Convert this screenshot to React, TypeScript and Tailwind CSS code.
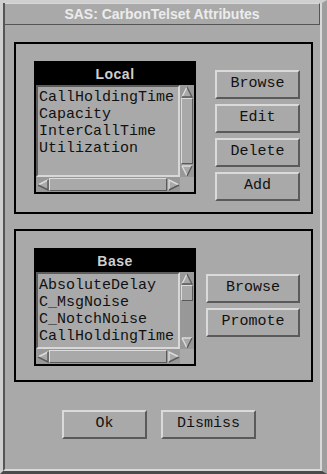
import React from "react";

const MONO = { fontFamily: '"Liberation Mono", "DejaVu Sans Mono", monospace' };
const SANS = { fontFamily: '"Liberation Sans", Arial, sans-serif' };

function Arrow({ dir }: { dir: "up" | "down" | "left" | "right" }) {
  let pts = "";
  let light = "";
  let dark = "";
  if (dir === "up") {
    pts = "6,1 11,11 1,11";
    light = "M6,1 L1,11";
    dark = "M6,1 L11,11 L1,11";
  } else if (dir === "down") {
    pts = "1,1 11,1 6,11";
    light = "M1,1 L11,1 M1,1 L6,11";
    dark = "M11,1 L6,11";
  } else if (dir === "left") {
    pts = "1,6 11,1 11,11";
    light = "M1,6 L11,1";
    dark = "M11,1 L11,11 L1,6";
  } else {
    pts = "1,1 11,6 1,11";
    light = "M1,11 L1,1 L11,6";
    dark = "M11,6 L1,11";
  }
  return (
    <svg width="12" height="12" viewBox="0 0 12 12">
      <polygon points={pts} fill="#a9a9a9" />
      <path d={light} stroke="#dcdcdc" strokeWidth="1.4" fill="none" />
      <path d={dark} stroke="#5a5a5a" strokeWidth="1.4" fill="none" />
    </svg>
  );
}

function VScroll({ h, thumb }: { h: number; thumb: number }) {
  return (
    <div className="w-[14px] flex flex-col bg-[#989898]" style={{ height: h }}>
      <div className="h-[13px] flex items-center justify-center shrink-0">
        <Arrow dir="up" />
      </div>
      <div className="flex-1 flex flex-col">
        <div
          className="mx-[1px] bg-[#a9a9a9] border-t border-l border-t-[#dcdcdc] border-l-[#dcdcdc] border-b border-r border-b-[#5a5a5a] border-r-[#5a5a5a]"
          style={{ height: thumb }}
        />
      </div>
      <div className="h-[13px] flex items-center justify-center shrink-0">
        <Arrow dir="down" />
      </div>
    </div>
  );
}

function HScroll() {
  return (
    <div className="flex h-[15px]">
      <div className="w-[144px] h-[15px] flex bg-[#989898] items-center">
        <div className="w-[13px] flex items-center justify-center">
          <Arrow dir="left" />
        </div>
        <div className="flex-1 h-[13px] bg-[#a9a9a9] border-t border-l border-t-[#dcdcdc] border-l-[#dcdcdc] border-b border-r border-b-[#5a5a5a] border-r-[#5a5a5a]" />
        <div className="w-[13px] flex items-center justify-center">
          <Arrow dir="right" />
        </div>
      </div>
      <div className="w-[14px] h-[15px] bg-[#a9a9a9]" />
    </div>
  );
}

function ListBox({
  title,
  items,
  h,
  thumb,
  pt,
}: {
  title: string;
  items: string[];
  h: number;
  thumb: number;
  pt: number;
}) {
  return (
    <div className="w-[162px] border-2 border-black flex flex-col shrink-0 bg-[#a9a9a9]">
      <div
        className="h-[22px] bg-black text-[#cfcfcf] text-[14px] font-bold flex items-center justify-center tracking-[0.5px]"
        style={SANS}
      >
        {title}
      </div>
      <div className="flex">
        <div
          className="w-[144px] border-t-2 border-l-2 border-t-[#5c5c5c] border-l-[#5c5c5c] border-b-2 border-r-2 border-b-[#d8d8d8] border-r-[#d8d8d8] overflow-hidden pl-[1px]"
          style={{ height: h, paddingTop: pt }}
        >
          {items.map((it) => (
            <div
              key={it}
              className="text-[15px] leading-[17px] text-[#111111] whitespace-nowrap"
              style={MONO}
            >
              {it}
            </div>
          ))}
        </div>
        <VScroll h={h} thumb={thumb} />
      </div>
      <HScroll />
    </div>
  );
}

function Btn({ label, w }: { label: string; w: number }) {
  return (
    <div
      className="h-[29px] flex items-center justify-center bg-[#a9a9a9] border-2 border-t-[#dadada] border-l-[#dadada] border-b-[#5a5a5a] border-r-[#5a5a5a] text-[15px] text-[#111111] shrink-0"
      style={{ ...MONO, width: w }}
    >
      {label}
    </div>
  );
}

export default function App() {
  return (
    <div className="w-[327px] h-[474px] bg-[#a9a9a9] border-t-[3px] border-l-[3px] border-t-[#cfcfcf] border-l-[#cfcfcf] border-b-[3px] border-b-[#4a4a4a] border-r-[5px] border-r-[#9e9e9e] box-border overflow-hidden">
      <div className="h-full border-l-2 border-l-[#555555] border-r-2 border-r-[#d8d8d8] border-b-2 border-b-[#d8d8d8] flex flex-col">
        <div
          className="h-[22px] shrink-0 border-t border-t-[#d8d8d8] border-b border-b-[#555555] border-r border-r-[#555555] flex items-center justify-center text-[#ececec] text-[14px] font-bold"
          style={SANS}
        >
          SAS: CarbonTelset Attributes
        </div>

        <div className="mt-[17px] ml-[9px] w-[299px] h-[172px] shrink-0 border-2 border-black flex items-start pt-[17px] pl-[18px] gap-[19px]">
          <ListBox
            title="Local"
            items={["CallHoldingTime", "Capacity", "InterCallTime", "Utilization"]}
            h={92}
            thumb={66}
            pt={2}
          />
          <div className="mt-[9px] flex flex-col gap-[5px]">
            <Btn label="Browse" w={85} />
            <Btn label="Edit" w={85} />
            <Btn label="Delete" w={85} />
            <Btn label="Add" w={85} />
          </div>
        </div>

        <div className="mt-[15px] ml-[9px] w-[299px] h-[153px] shrink-0 border-2 border-black flex items-start pt-[17px] pl-[18px] gap-[10px]">
          <ListBox
            title="Base"
            items={["AbsoluteDelay", "C_MsgNoise", "C_NotchNoise", "CallHoldingTime"]}
            h={77}
            thumb={16}
            pt={3}
          />
          <div className="mt-[26px] flex flex-col gap-[5px]">
            <Btn label="Browse" w={94} />
            <Btn label="Promote" w={94} />
          </div>
        </div>

        <div className="mt-[28px] pl-[57px] flex gap-[14px]">
          <Btn label="Ok" w={85} />
          <Btn label="Dismiss" w={95} />
        </div>
      </div>
    </div>
  );
}
